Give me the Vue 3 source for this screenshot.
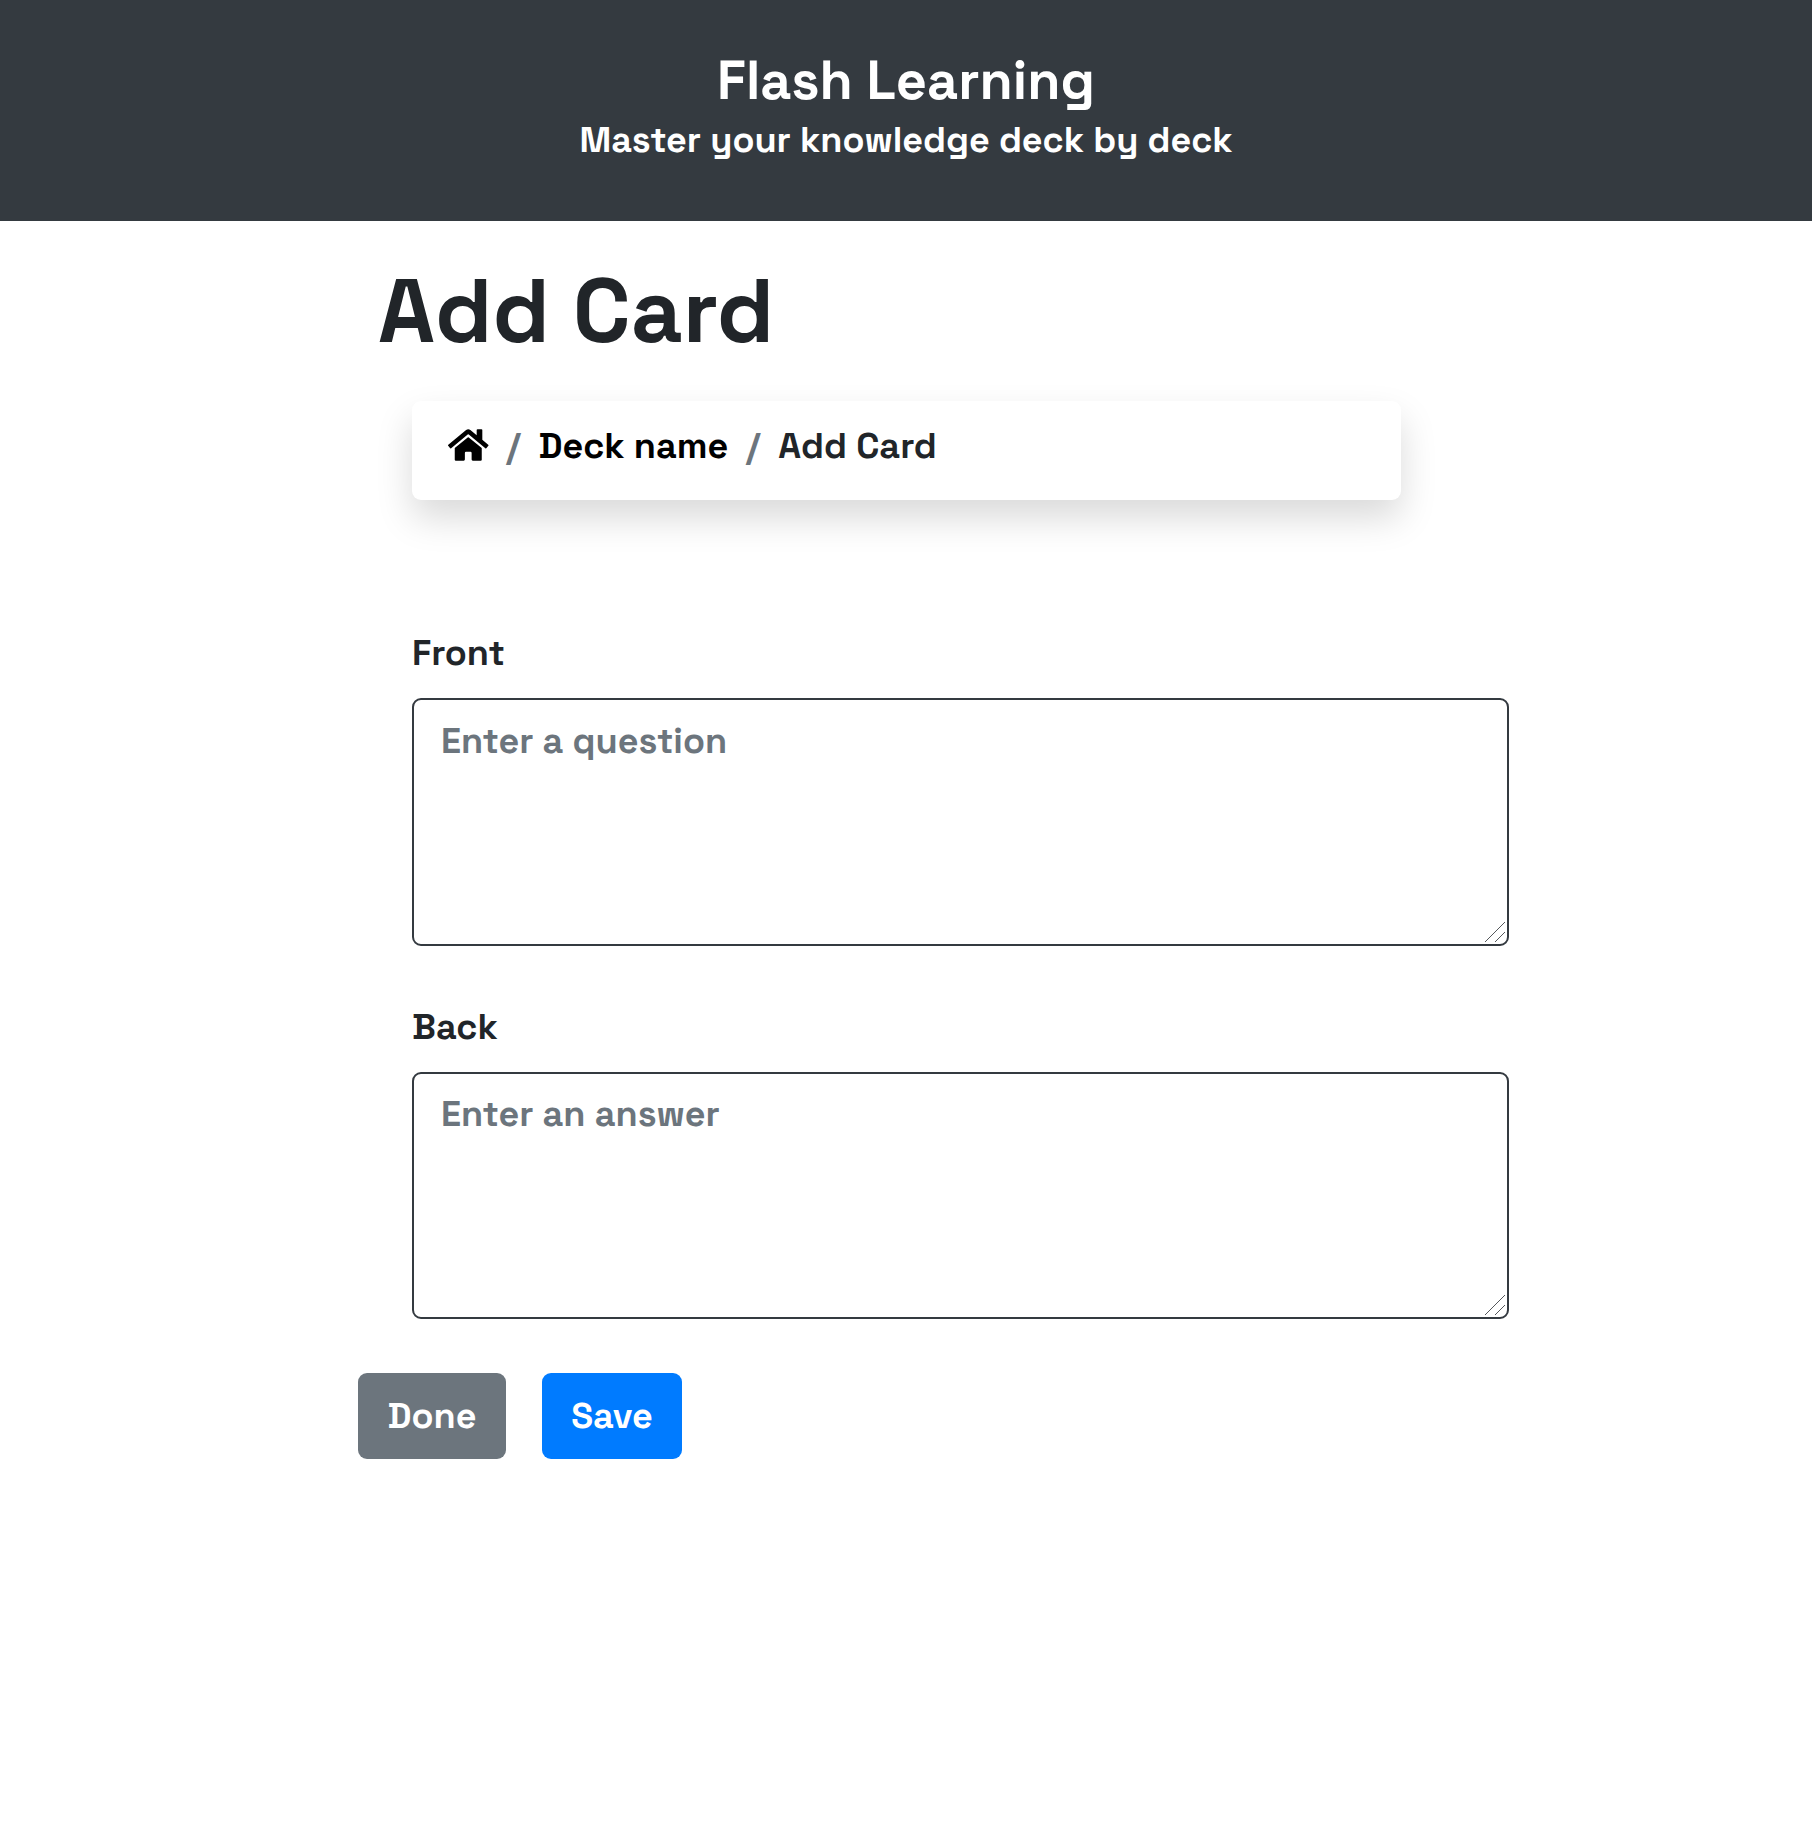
<script setup>
import { ref } from 'vue'

const front = ref('')
const back = ref('')
</script>

<template>
  <div class="page">
    <header class="hero">
      <h1 class="brand">Flash Learning</h1>
      <p class="tagline">Master your knowledge deck by deck</p>
    </header>

    <main class="content">
      <h2 class="title">Add Card</h2>

      <nav class="breadcrumb">
        <a class="home" aria-label="Home">
          <svg viewBox="0 0 576 512" width="40.5" height="36" fill="#000">
            <path d="M280.37 148.26L96 300.11V464a16 16 0 0 0 16 16l112.06-.29a16 16 0 0 0 15.92-16V368a16 16 0 0 1 16-16h64a16 16 0 0 1 16 16v95.64a16 16 0 0 0 16 16.05L464 480a16 16 0 0 0 16-16V300L295.67 148.26a12.19 12.19 0 0 0-15.3 0zM571.6 251.47L488 182.56V44.05a12 12 0 0 0-12-12h-56a12 12 0 0 0-12 12v72.61L318.47 43a48 48 0 0 0-61 0L4.34 251.47a12 12 0 0 0-1.6 16.9l25.5 31A12 12 0 0 0 45.15 301l235.22-193.74a12.19 12.19 0 0 1 15.3 0L530.9 301a12 12 0 0 0 16.9-1.6l25.5-31a12 12 0 0 0-1.7-16.93z" />
          </svg>
        </a>
        <span>/</span>
        <a class="deck">Deck name</a>
        <span>/</span>
        <span class="current">Add Card</span>
      </nav>

      <form class="form" @submit.prevent>
        <div class="group">
          <label for="front">Front</label>
          <div class="field">
            <textarea id="front" v-model="front" placeholder="Enter a question"></textarea>
            <svg class="grip" viewBox="0 0 20 20" width="20" height="20">
              <path d="M0 20L20 0M10 20L20 10" />
            </svg>
          </div>
        </div>
        <div class="group">
          <label for="back">Back</label>
          <div class="field short">
            <textarea id="back" v-model="back" placeholder="Enter an answer"></textarea>
            <svg class="grip" viewBox="0 0 20 20" width="20" height="20">
              <path d="M0 20L20 0M10 20L20 10" />
            </svg>
          </div>
        </div>
        <div class="actions">
          <button type="button" class="btn done">Done</button>
          <button type="submit" class="btn save">Save</button>
        </div>
      </form>
    </main>
  </div>
</template>

<style>
body {
  margin: 0;
  background: #fff;
}
</style>

<style scoped>
.page,
.page textarea,
.page button {
  font-family: 'Space Grotesk', Inter, sans-serif;
  font-size: 36px;
  font-weight: 700;
  line-height: 54px;
}
.page {
  min-height: 1842px;
  color: #212529;
}
.hero {
  box-sizing: border-box;
  height: 221px;
  padding-top: 49px;
  background: #343a40;
  color: #fff;
  text-align: center;
}
.brand {
  margin: 0;
  font-size: 54px;
  line-height: 63px;
}
.tagline {
  margin: 0;
  line-height: 56px;
}
.content {
  padding: 35px 0 0 358px;
}
.title {
  margin: 0 0 36px 20px;
  font-size: 90px;
  line-height: 109px;
}
.breadcrumb {
  box-sizing: border-box;
  display: flex;
  align-items: flex-start;
  gap: 18px;
  width: 989px;
  height: 99px;
  margin-left: 54px;
  padding: 18px 36px;
  border-radius: 9px;
  background: #fff;
  box-shadow: 0 18px 36px rgba(0, 0, 0, 0.15);
  color: #6c757d;
}
.home {
  display: flex;
  margin-top: 7.5px;
}
.deck {
  color: #000;
}
.breadcrumb .current {
  color: #212529;
}
.form {
  padding-top: 126px;
}
.group {
  display: flex;
  flex-direction: column;
  gap: 18px;
  width: 1097px;
  margin: 0 0 54px 54px;
}
.field {
  position: relative;
  display: flex;
  height: 248px;
}
.short {
  height: 247px;
}
.page textarea {
  box-sizing: border-box;
  width: 100%;
  height: 100%;
  margin: 0;
  padding: 14px 27px;
  border: 2px solid #343a40;
  border-radius: 9px;
  outline: none;
  resize: none;
  background: #fff;
  color: #495057;
}
.page .short textarea {
  padding-top: 13px;
}
textarea::placeholder {
  color: #6c757d;
  opacity: 1;
}
.grip {
  position: absolute;
  right: 4px;
  bottom: 4px;
  fill: none;
  stroke: #55585b;
  stroke-width: 1;
  pointer-events: none;
}
.actions {
  display: flex;
  gap: 36px;
}
.page .btn {
  height: 86px;
  padding: 0;
  border: 0;
  border-radius: 9px;
  color: #fff;
}
.page .done {
  width: 148px;
  background: #6c757d;
}
.page .save {
  width: 140px;
  background: #007bff;
}
</style>
